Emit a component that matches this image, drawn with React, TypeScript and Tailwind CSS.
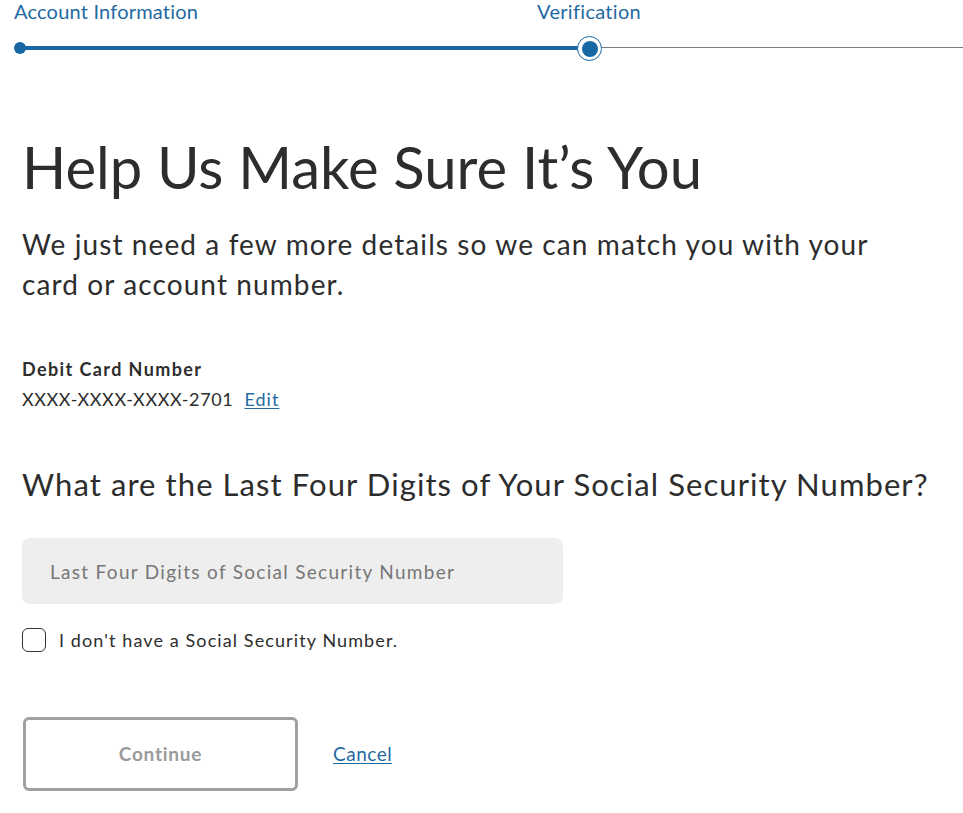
import { useState } from "react";

export default function App() {
  const [ssn, setSsn] = useState("");
  const [noSsn, setNoSsn] = useState(false);

  return (
    <div className="min-h-[813px] w-full bg-white overflow-hidden text-[#2d2d2d] [font-family:Lato,'Open_Sans',sans-serif]">
      {/* progress steps */}
      <div className="relative h-[62px]">
        <div className="flex text-[20px] leading-[22px] text-[#1f6aa2]">
          <span className="ml-[14px] tracking-[0.2px]">Account Information</span>
          <span className="ml-[339px] tracking-[0.3px]">Verification</span>
        </div>
        <div className="absolute left-[14px] top-[42px] h-[12px] w-[12px] rounded-full bg-[#1667a3]" />
        <div className="absolute left-[20px] top-[46px] h-[4px] w-[569px] bg-[#1667a3]" />
        <div className="absolute left-[601px] right-0 top-[47px] h-[1px] bg-[#7a7a7a]" />
        <div className="absolute left-[577px] top-[36px] flex h-[25px] w-[25px] items-center justify-center rounded-full border-[1.5px] border-[#1667a3] bg-white">
          <div className="h-[16px] w-[16px] rounded-full bg-[#1667a3]" />
        </div>
      </div>

      <div className="pl-[22px] pr-[20px]">
        <h1 className="mt-[73px] text-[58px] leading-[64px] font-normal">
          Help Us Make Sure It’s You
        </h1>
        <p className="mt-[25px] text-[28px] leading-[40px] tracking-[1.1px] max-w-[900px]">
          We just need a few more details so we can match you with your card or account number.
        </p>

        <div className="mt-[50px] text-[18px] leading-[30px]">
          <div className="font-bold tracking-[1.4px]">Debit Card Number</div>
          <div className="tracking-[0.6px]">
            XXXX-XXXX-XXXX-2701{" "}
            <a href="#" className="ml-[6px] tracking-[1px] text-[#1f6aa2] underline underline-offset-2">
              Edit
            </a>
          </div>
        </div>

        <h2 className="mt-[50px] text-[31px] leading-[40px] font-normal tracking-[1.08px]">
          What are the Last Four Digits of Your Social Security Number?
        </h2>

        <input
          type="text"
          value={ssn}
          onChange={(e) => setSsn(e.target.value)}
          placeholder="Last Four Digits of Social Security Number"
          className="mt-[34px] block h-[66px] w-[541px] rounded-[8px] bg-[#eeeeee] px-[28px] text-[19px] tracking-[1.3px] placeholder:text-[#777777] focus:outline-none"
        />

        <label className="mt-[24px] flex items-center gap-[13px] text-[18px] leading-[24px] tracking-[1.1px] cursor-pointer">
          <input
            type="checkbox"
            checked={noSsn}
            onChange={(e) => setNoSsn(e.target.checked)}
            className="sr-only"
          />
          <span className="h-[24px] w-[24px] rounded-[6px] border-[1.5px] border-[#333333] bg-white" />
          <span>I don't have a Social Security Number.</span>
        </label>

        <div className="mt-[65px] flex items-center gap-[35px]">
          <button className="ml-[1px] h-[74px] w-[275px] rounded-[6px] border-[3px] border-[#a0a0a0] bg-white text-[19px] font-bold tracking-[0.75px] text-[#9a9a9a]">
            Continue
          </button>
          <a href="#" className="text-[19px] tracking-[0.5px] text-[#1f6aa2] underline underline-offset-2">
            Cancel
          </a>
        </div>
      </div>
    </div>
  );
}
